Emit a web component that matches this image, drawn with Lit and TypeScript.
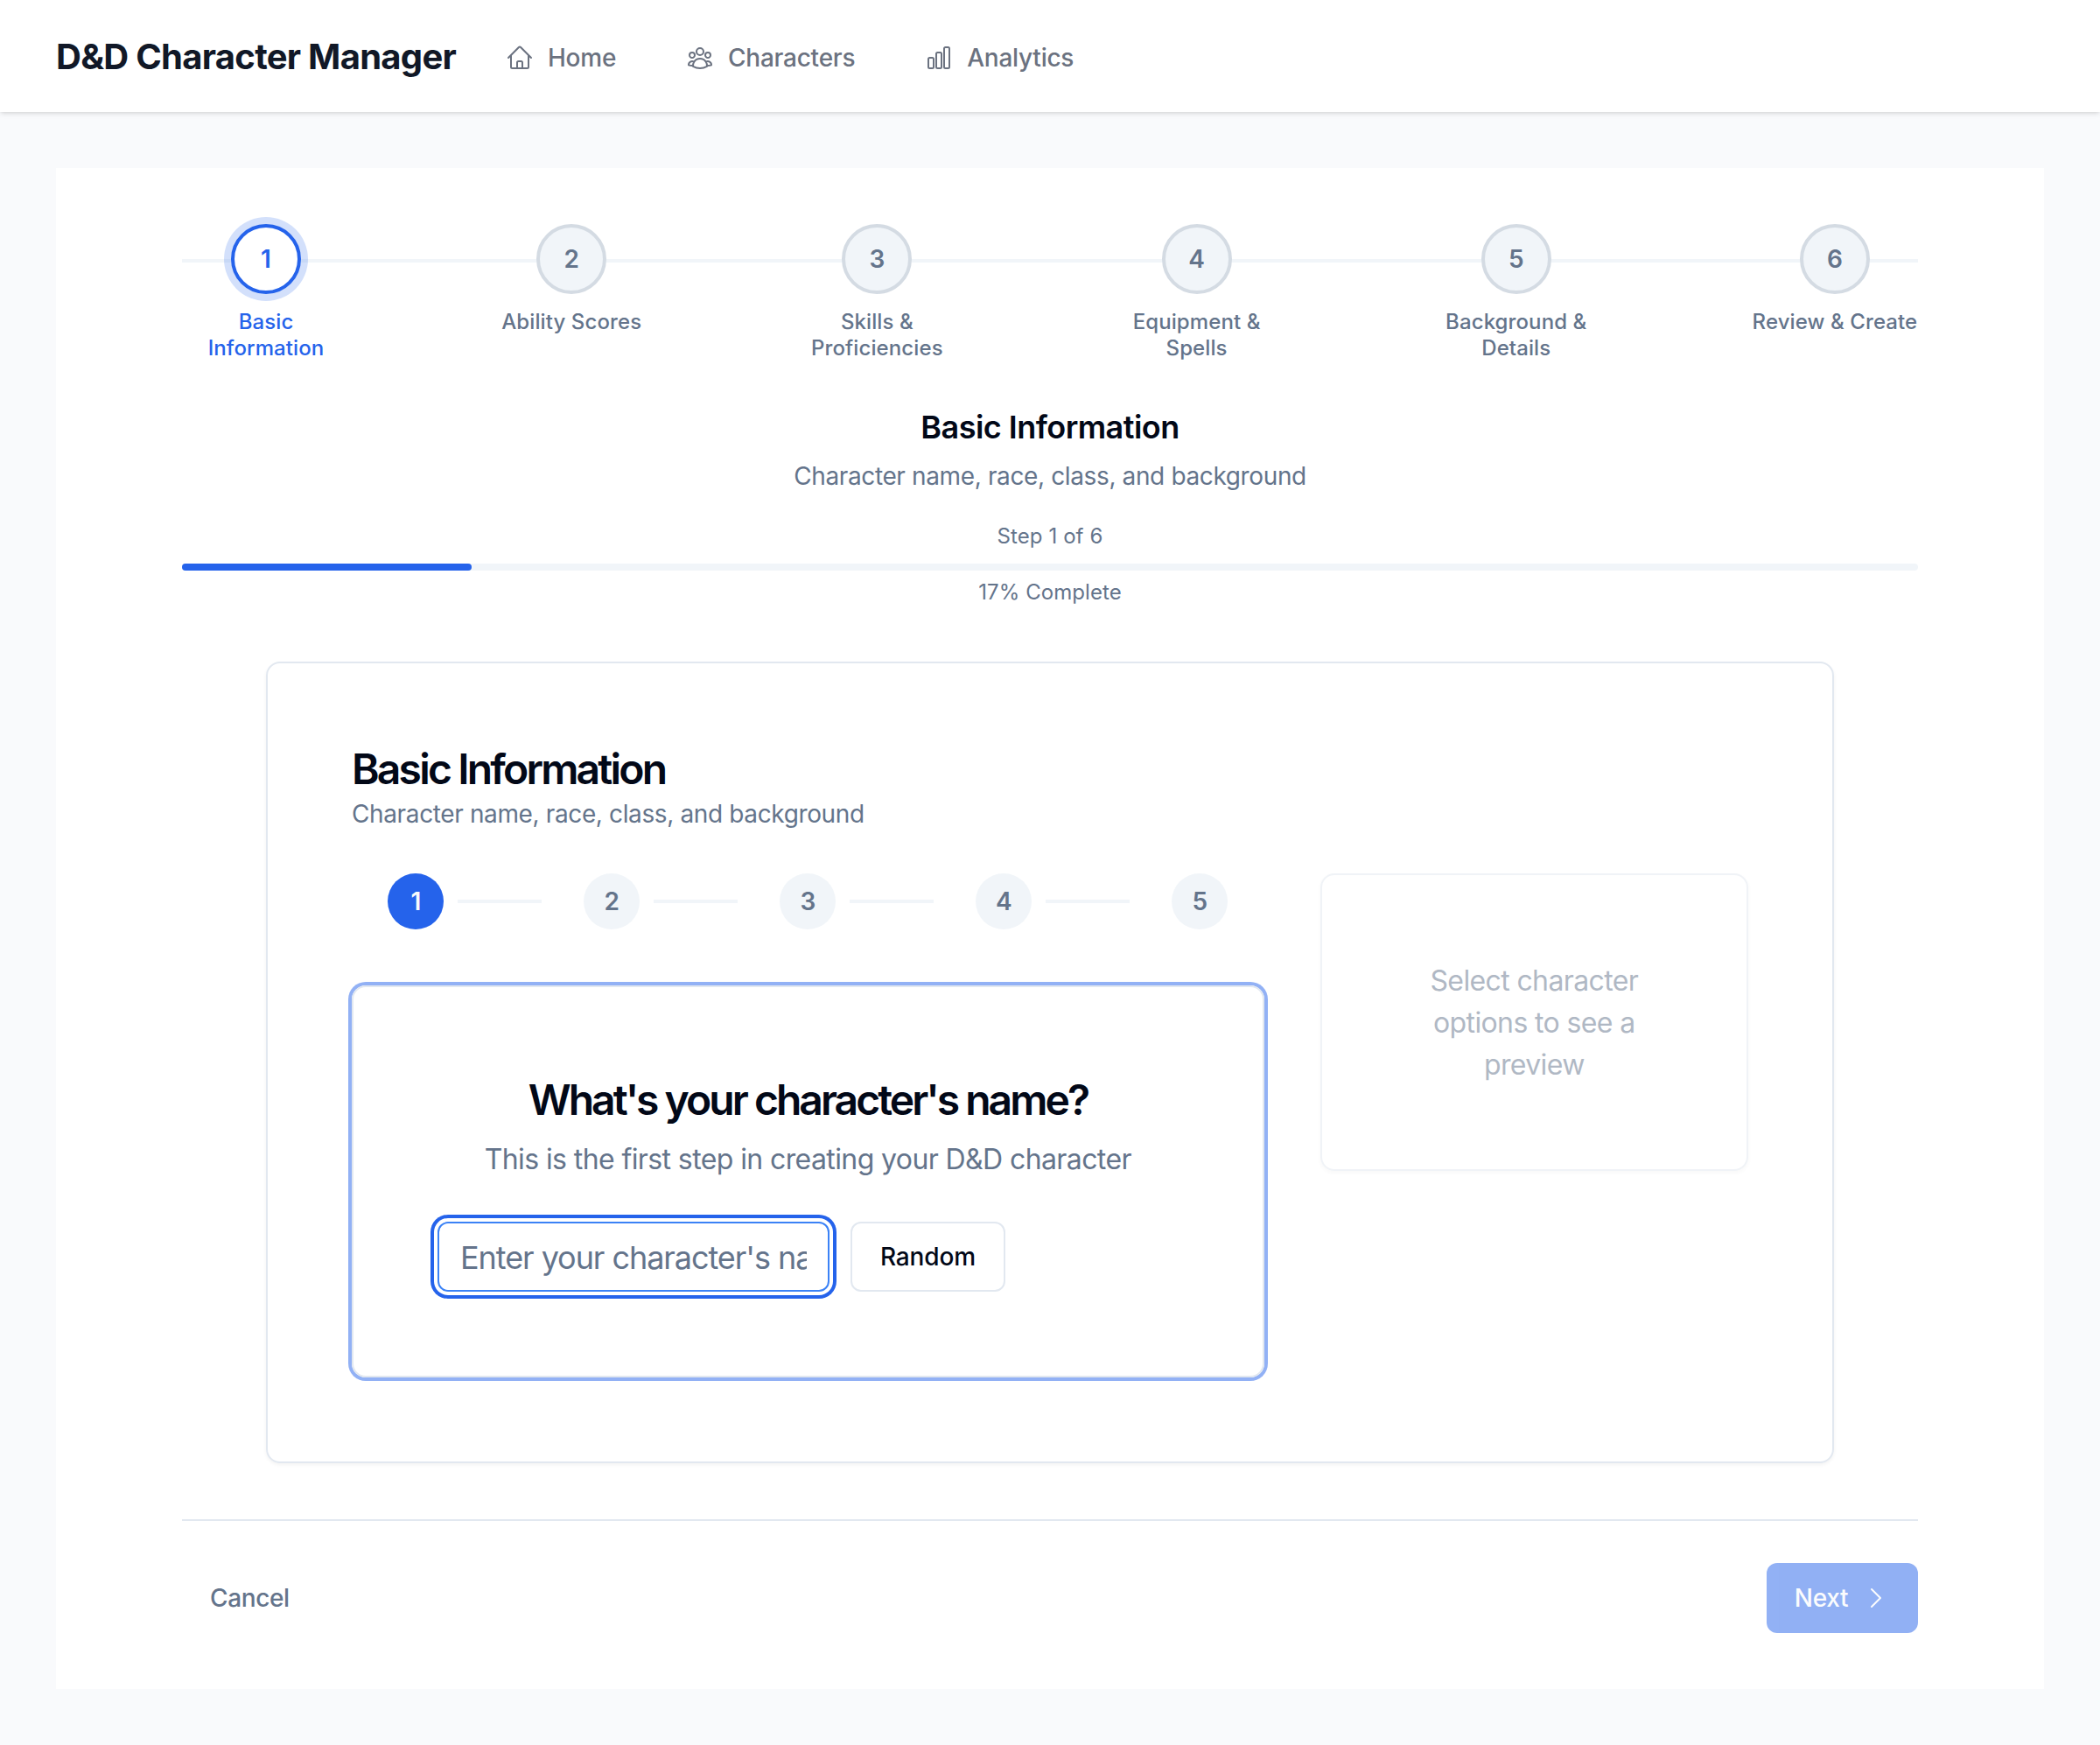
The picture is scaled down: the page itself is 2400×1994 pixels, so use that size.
import { LitElement, html, css, svg } from "lit";
import { customElement } from "lit/decorators.js";
import { classMap } from "lit/directives/class-map.js";

const icon = (d: string, cls = "icon") => html`
  <svg class=${cls} viewBox="0 0 24 24" fill="none" stroke="currentColor" stroke-width="1.5"
    stroke-linecap="round" stroke-linejoin="round" aria-hidden="true">${svg`<path d=${d}></path>`}</svg>`;

const HOME =
  "m2.25 12 8.954-8.955c.44-.439 1.152-.439 1.591 0L21.75 12M4.5 9.75v10.125c0 .621.504 1.125 1.125 1.125H9.75v-4.875c0-.621.504-1.125 1.125-1.125h2.25c.621 0 1.125.504 1.125 1.125V21h4.125c.621 0 1.125-.504 1.125-1.125V9.75M8.25 21h8.25";
const GROUP =
  "M18 18.72a9.094 9.094 0 0 0 3.741-.479 3 3 0 0 0-4.682-2.72m.94 3.198.001.031c0 .225-.012.447-.037.666A11.944 11.944 0 0 1 12 21c-2.17 0-4.207-.576-5.963-1.584A6.062 6.062 0 0 1 6 18.719m12 0a5.971 5.971 0 0 0-.941-3.197m0 0A5.995 5.995 0 0 0 12 12.75a5.995 5.995 0 0 0-5.058 2.772m0 0a3 3 0 0 0-4.681 2.72 8.986 8.986 0 0 0 3.74.477m.94-3.197a5.971 5.971 0 0 0-.94 3.197M15 6.75a3 3 0 1 1-6 0 3 3 0 0 1 6 0Zm6 3a2.25 2.25 0 1 1-4.5 0 2.25 2.25 0 0 1 4.5 0Zm-13.5 0a2.25 2.25 0 1 1-4.5 0 2.25 2.25 0 0 1 4.5 0Z";
const CHART =
  "M3 13.125C3 12.504 3.504 12 4.125 12h2.25c.621 0 1.125.504 1.125 1.125v6.75C7.5 20.496 6.996 21 6.375 21h-2.25A1.125 1.125 0 0 1 3 19.875v-6.75ZM9.75 8.625c0-.621.504-1.125 1.125-1.125h2.25c.621 0 1.125.504 1.125 1.125v11.25c0 .621-.504 1.125-1.125 1.125h-2.25a1.125 1.125 0 0 1-1.125-1.125V8.625ZM16.5 4.125c0-.621.504-1.125 1.125-1.125h2.25C20.496 3 21 3.504 21 4.125v15.75c0 .621-.504 1.125-1.125 1.125h-2.25a1.125 1.125 0 0 1-1.125-1.125V4.125Z";
const CHEVRON = "m8.25 4.5 7.5 7.5-7.5 7.5";

const STEPS: { label: string; size: string }[] = [
  { label: "Basic Information", size: "wrap" },
  { label: "Ability Scores", size: "scores" },
  { label: "Skills & Proficiencies", size: "wrap" },
  { label: "Equipment & Spells", size: "wrap" },
  { label: "Background & Details", size: "wrap" },
  { label: "Review & Create", size: "review" },
];

@customElement("app-nav")
export class AppNav extends LitElement {
  static styles = css`
    :host { display: block; }
    .bar {
      position: relative;
      display: flex;
      align-items: center;
      gap: 56px;
      height: 128px;
      box-sizing: border-box;
      padding: 0 64px;
      background: #fff;
      box-shadow: 0 2px 6px rgba(0, 0, 0, 0.1), 0 2px 4px -2px rgba(0, 0, 0, 0.1);
    }
    .brand {
      flex: 0 0 458px;
      padding-top: 2px;
      font-size: 40px;
      line-height: 56px;
      font-weight: 700;
      letter-spacing: -0.72px;
      color: #111827;
      white-space: nowrap;
    }
    .links { display: flex; gap: 80px; padding-top: 4px; }
    .link {
      display: flex;
      align-items: center;
      gap: 16px;
      font-size: 28px;
      line-height: 40px;
      font-weight: 500;
      letter-spacing: -0.25px;
      color: #6b7280;
    }
    .icon { width: 32px; height: 32px; }
  `;
  render() {
    return html`
      <nav class="bar">
        <div class="brand">D&amp;D Character Manager</div>
        <div class="links">
          <div class="link">${icon(HOME)}<span>Home</span></div>
          <div class="link">${icon(GROUP)}<span>Characters</span></div>
          <div class="link">${icon(CHART)}<span>Analytics</span></div>
        </div>
      </nav>`;
  }
}

@customElement("wizard-stepper")
export class WizardStepper extends LitElement {
  static styles = css`
    :host { display: block; }
    .steps { position: relative; display: flex; justify-content: space-between; }
    .steps::before {
      content: "";
      position: absolute;
      left: 0;
      right: 0;
      top: 40px;
      height: 4px;
      background: #f1f5f9;
    }
    .step {
      position: relative;
      display: flex;
      flex-direction: column;
      align-items: center;
      gap: 16px;
      color: #64748b;
    }
    .wrap { width: 192px; }
    .scores { width: 160px; }
    .review { width: 190px; }
    .dot {
      display: flex;
      align-items: center;
      justify-content: center;
      width: 80px;
      height: 80px;
      box-sizing: border-box;
      border: 4px solid #d4dbe3;
      border-radius: 50%;
      background: #f1f5f9;
      font-size: 28px;
      line-height: 40px;
      font-weight: 600;
    }
    .label {
      margin: 1px 0 -1px;
      padding: 0 12px;
      font-size: 24px;
      line-height: 30px;
      font-weight: 500;
      letter-spacing: 0.1px;
      text-align: center;
    }
    .scores .label, .review .label { padding: 0; white-space: nowrap; }
    .current { color: #2563eb; }
    .current .dot {
      background: #fff;
      border-color: #2563eb;
      box-shadow: 0 0 0 8px rgba(37, 99, 235, 0.2);
    }
  `;
  render() {
    return html`<div class="steps">
      ${STEPS.map(
        (s, i) => html`<div class=${classMap({ step: true, [s.size]: true, current: i === 0 })}>
          <div class="dot">${i + 1}</div>
          <div class="label">${s.label}</div>
        </div>`
      )}
    </div>`;
  }
}

@customElement("app-root")
export class AppRoot extends LitElement {
  static styles = css`
    :host {
      display: block;
      min-height: 1994px;
      box-sizing: border-box;
      background: #f9fafc;
      font-family: Inter, "Liberation Sans", sans-serif;
      color: #020817;
    }
    .page { padding: 64px; }
    .sheet { padding: 64px 144px; background: #fff; }
    .title {
      margin: 48px 0 0;
      font-size: 36px;
      line-height: 56px;
      font-weight: 600;
      letter-spacing: -0.54px;
      text-align: center;
    }
    .desc {
      margin: 8px 0 0;
      font-size: 28px;
      line-height: 40px;
      letter-spacing: -0.37px;
      color: #64748b;
    }
    .center { text-align: center; }
    .meta {
      padding-top: 1px;
      font-size: 24px;
      line-height: 32px;
      letter-spacing: 0.08px;
      color: #64748b;
      text-align: center;
    }
    .count { margin-top: 32px; }
    .track { height: 8px; margin: 15px 0 8px; border-radius: 4px; background: #f1f5f9; }
    .fill { height: 8px; border-radius: 4px; background: #2563eb; }
    .card {
      margin: 63px 96px 64px;
      padding: 96px;
      border: 2px solid #e2e8f0;
      border-radius: 16px;
      box-shadow: 0 2px 4px rgba(0, 0, 0, 0.05);
    }
    .heading {
      margin: 0;
      padding-top: 1px;
      font-size: 48px;
      line-height: 48px;
      font-weight: 600;
      letter-spacing: -2.81px;
    }
    .sub { margin-top: 7px; }
    .columns {
      display: grid;
      grid-template-columns: repeat(3, minmax(0, 1fr));
      gap: 64px;
      align-items: start;
      margin-top: 48px;
    }
    .main { grid-column: span 2; }
    .substeps { display: flex; justify-content: center; gap: 48px; margin-bottom: 64px; }
    .substep { display: flex; align-items: center; gap: 16px; }
    .num {
      display: flex;
      align-items: center;
      justify-content: center;
      width: 64px;
      height: 64px;
      border-radius: 50%;
      background: #f1f5f9;
      color: #64748b;
      font-size: 28px;
      line-height: 40px;
      font-weight: 600;
    }
    .num.on { background: #2563eb; color: #f8fafc; }
    .dash { width: 96px; height: 4px; background: #f1f5f9; }
    .panel {
      padding: 96px;
      border: 2px solid #e2e8f0;
      border-radius: 16px;
      box-shadow: 0 0 0 4px rgba(37, 99, 235, 0.5);
    }
    .question { line-height: 64px; letter-spacing: -2.96px; text-align: center; }
    .lead {
      margin: 12px 0 47px;
      font-size: 32px;
      line-height: 48px;
      letter-spacing: -0.6px;
      color: #64748b;
      text-align: center;
    }
    .row { display: flex; gap: 24px; }
    .name {
      width: 448px;
      height: 80px;
      box-sizing: border-box;
      margin: 0;
      padding: 2px 24px 0;
      border: 2px solid #3b82f6;
      border-radius: 12px;
      outline: none;
      background: #fff;
      box-shadow: 0 0 0 4px #fff, 0 0 0 8px #2563eb;
      font-family: inherit;
      font-size: 36px;
      letter-spacing: -1.06px;
    }
    .name::placeholder { color: #64748b; opacity: 1; }
    .btn {
      display: flex;
      align-items: center;
      justify-content: center;
      height: 80px;
      box-sizing: border-box;
      border-radius: 12px;
      font-size: 28px;
      line-height: 40px;
      font-weight: 500;
    }
    .random { width: 177px; border: 2px solid #e2e8f0; letter-spacing: -0.1px; }
    .preview {
      padding: 97px 96px 95px;
      border: 2px solid #e2e8f0;
      border-radius: 16px;
      box-shadow: 0 2px 4px rgba(0, 0, 0, 0.05);
      opacity: 0.5;
      font-size: 32px;
      line-height: 48px;
      letter-spacing: -0.62px;
      color: #64748b;
      text-align: center;
    }
    .actions {
      display: flex;
      justify-content: space-between;
      padding-top: 48px;
      border-top: 2px solid #e2e8f0;
    }
    .cancel { padding: 0 32px; color: #64748b; letter-spacing: -0.38px; }
    .next {
      gap: 16px;
      width: 173px;
      background: #2563eb;
      color: #f8fafc;
      opacity: 0.5;
      letter-spacing: -0.3px;
    }
    .chev { width: 32px; height: 32px; }
  `;

  private step = 1;

  render() {
    return html`
      <app-nav></app-nav>
      <main class="page">
        <section class="sheet">
          <wizard-stepper></wizard-stepper>
          <h2 class="title">Basic Information</h2>
          <p class="desc center">Character name, race, class, and background</p>
          <div class="meta count">Step 1 of 6</div>
          <div class="track"><div class="fill" style="width:${(this.step / STEPS.length) * 100}%"></div></div>
          <div class="meta">17% Complete</div>

          <div class="card">
            <h3 class="heading">Basic Information</h3>
            <p class="desc sub">Character name, race, class, and background</p>
            <div class="columns">
              <div class="main">
                <div class="substeps">
                  ${[1, 2, 3, 4, 5].map(
                    (n) => html`<div class="substep">
                      <div class=${classMap({ num: true, on: n === 1 })}>${n}</div>
                      ${n < 5 ? html`<div class="dash"></div>` : null}
                    </div>`
                  )}
                </div>
                <div class="panel">
                  <h3 class="heading question">What's your character's name?</h3>
                  <p class="lead">This is the first step in creating your D&amp;D character</p>
                  <div class="row">
                    <input class="name" type="text" placeholder="Enter your character's name" />
                    <div class="btn random">Random</div>
                  </div>
                </div>
              </div>
              <aside class="preview">Select character options to see a preview</aside>
            </div>
          </div>

          <div class="actions">
            <div class="btn cancel">Cancel</div>
            <div class="btn next"><span>Next</span>${icon(CHEVRON, "chev")}</div>
          </div>
        </section>
      </main>`;
  }
}
